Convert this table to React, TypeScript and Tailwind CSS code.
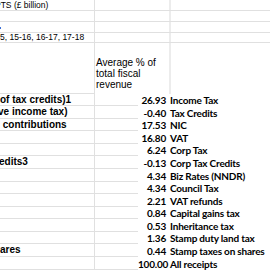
const rows = [
  { a: "of tax credits)1", v: "26.93", label: "Income Tax", h: "h-[12px]" },
  { a: "ve income tax)", v: "-0.40", label: "Tax Credits", h: "h-[13px]", shift: "-ml-[2px]" },
  { a: " contributions", v: "17.53", label: "NIC", h: "h-[12px]" },
  { a: "", v: "16.80", label: "VAT", h: "h-[13px]" },
  { a: "", v: "6.24", label: "Corp Tax", h: "h-[12px]" },
  { a: "edits3", v: "-0.13", label: "Corp Tax Credits", h: "h-[13px]", shift: "-ml-[1px]" },
  { a: "", v: "4.34", label: "Biz Rates (NNDR)", h: "h-[13px]" },
  { a: "", v: "4.34", label: "Council Tax", h: "h-[12px]" },
  { a: "", v: "2.21", label: "VAT refunds", h: "h-[13px]" },
  { a: "", v: "0.84", label: "Capital gains tax", h: "h-[12px]" },
  { a: "", v: "0.53", label: "Inheritance tax", h: "h-[13px]" },
  { a: "", v: "1.36", label: "Stamp duty land tax", h: "h-[12px]" },
  { a: "ares", v: "0.44", label: "Stamp taxes on shares", h: "h-[13px]" },
  { a: "", v: "100.00", label: "All receipts", h: "h-[13px]" },
];

function TopRow({ h, children }: { h: string; children?: React.ReactNode }) {
  return (
    <div className={`flex ${h} border-b border-[#e0e0e0]`}>
      <div className="w-[95px] shrink-0 border-r border-[#e0e0e0] overflow-visible whitespace-nowrap flex items-center text-[8.5px] leading-none">
        {children}
      </div>
      <div className="w-[76px] shrink-0 border-r-2 border-[#ececec]" />
      <div className="flex-1" />
    </div>
  );
}

export default function App() {
  return (
    <div className="w-[270px] h-[270px] overflow-hidden bg-white text-black font-['Liberation_Sans',Arial,sans-serif]">
      {/* top rows */}
      <TopRow h="h-[11px]">
        <span className="-ml-[5px]">PTS (£ billion)</span>
      </TopRow>
      <TopRow h="h-[11px]" />
      <TopRow h="h-[11px]">
        <span className="-ml-[1px] w-[2px] h-[2px] mt-[2px] bg-[#3b6fd6]" />
      </TopRow>
      <TopRow h="h-[10px]">
        <span>5, 15-16, 16-17, 17-18</span>
      </TopRow>

      {/* header */}
      <div className="flex h-[51px]">
        <div className="w-[95px] shrink-0 border-r border-b border-[#e0e0e0]" />
        <div className="w-[76px] shrink-0 border-r-2 border-[#ececec] flex">
          <div className="flex-1 flex flex-col">
            <div className="flex-1 pl-[1px] pb-[4px] flex items-end text-[10px] leading-[11px]">
              <span>
                Average % of
                <br />
                total fiscal
                <br />
                revenue
              </span>
            </div>
          </div>
        </div>
        <div className="flex-1" />
      </div>

      {/* data */}
      {rows.map((r, i) => (
        <div key={i} className={`flex ${r.h}`}>
          <div className="w-[95px] shrink-0 border-r border-b border-t-0 border-[#e0e0e0] overflow-hidden whitespace-pre flex items-center font-bold text-[10px] leading-none">
            <span className={r.shift ?? ""}>{r.a}</span>
          </div>
          <div className="w-[74px] shrink-0 flex">
            <div className="w-[43px] shrink-0 border-b border-[#e0e0e0]" />
            <div className="flex-1 flex items-center justify-end pr-[3px] font-['Lato',sans-serif] font-bold text-[10px] leading-none tracking-[-0.2px]">
              {r.v}
            </div>
          </div>
          <div className="flex-1 flex items-center pl-[1px] font-['Lato',sans-serif] font-bold text-[10px] leading-none tracking-[-0.2px] whitespace-nowrap">
            {r.label}
          </div>
        </div>
      ))}
    </div>
  );
}
